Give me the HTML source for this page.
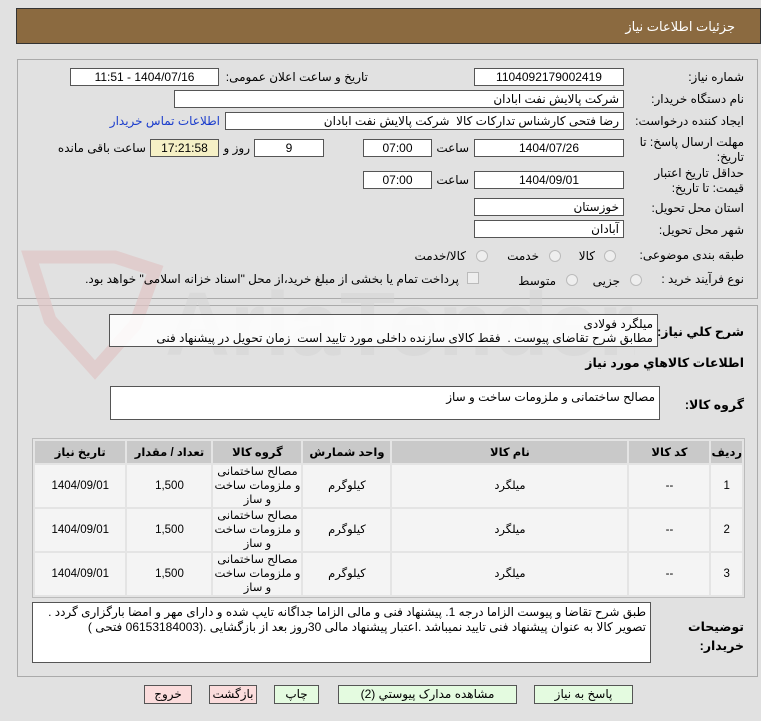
<!DOCTYPE html>
<html><head><meta charset="utf-8"><style>
*{box-sizing:border-box;margin:0;padding:0}
body{width:761px;height:721px;background:#e1e1e1;font-family:"Liberation Sans","DejaVu Sans",sans-serif;font-size:12px;color:#000;position:relative;overflow:hidden}
.a{position:absolute}
.box{position:absolute;background:#fff;border:1px solid #555;direction:rtl;padding:0 4px;line-height:16px;white-space:nowrap;overflow:hidden}
.c{text-align:center}
.lbl{position:absolute;direction:rtl;white-space:nowrap;text-align:right}
.wr{white-space:normal}
.rad{position:absolute;width:12px;height:12px;border-radius:50%;border:1px solid #bbb;background:#eee}
table{border-collapse:separate;border-spacing:2px;position:absolute;left:32px;top:438px;width:713px;border:1px solid #bbb;background:#e4e4e4}
td,th{text-align:center;font-size:11.5px;direction:rtl}
th{background:#c9c9c9;height:22px;font-weight:bold}
td{background:#f4f4f4;height:41px;line-height:14px}
.btn{position:absolute;top:685px;height:19px;border:1px solid #555;background:#e4fbe0;text-align:center;line-height:17px;direction:rtl}
.pk{background:#fbdcdc}
</style></head><body>
<div class="a" style="left:16px;top:8px;width:745px;height:36px;background:#8b6a40;border:1px solid #333"></div>
<div class="lbl" style="right:26px;top:19px;color:#fff;font-size:13px">جزئیات اطلاعات نیاز</div>

<div class="a" style="left:17px;top:59px;width:741px;height:240px;border:1px solid #aaa"></div>
<div class="a" style="left:17px;top:305px;width:741px;height:372px;border:1px solid #aaa"></div>

<svg class="a" style="left:15px;top:245px" width="620" height="140">
<path d="M15 12 L100 12 L140 25 L120 80 L80 125 L35 75 Z" fill="none" stroke="#e0c4c4" stroke-width="13" stroke-opacity="0.7"/>
<text x="150" y="110" font-size="90" font-family="Liberation Sans" font-weight="bold" fill="#d2d2d2" fill-opacity="0.45">AriaTender.net</text>
</svg>

<div class="lbl" style="right:17px;top:70px">شماره نیاز:</div>
<div class="box c" style="left:474px;top:68px;width:150px;height:18px">1104092179002419</div>
<div class="lbl" style="right:393px;top:70px">تاریخ و ساعت اعلان عمومی:</div>
<div class="box c" style="left:70px;top:68px;width:149px;height:18px">1404/07/16 - 11:51</div>

<div class="lbl" style="right:17px;top:92px">نام دستگاه خریدار:</div>
<div class="box" style="left:174px;top:90px;width:450px;height:18px">شرکت پالایش نفت ابادان</div>

<div class="lbl" style="right:17px;top:114px">ایجاد کننده درخواست:</div>
<div class="box" style="left:225px;top:112px;width:399px;height:18px">رضا فتحی کارشناس تدارکات کالا&nbsp; شرکت پالایش نفت ابادان</div>
<div class="lbl" style="right:541px;top:114px;color:#1a3ccc">اطلاعات تماس خریدار</div>

<div class="lbl wr" style="right:17px;top:135px;line-height:15px;width:115px">مهلت ارسال پاسخ: تا تاریخ:</div>
<div class="box c" style="left:474px;top:139px;width:150px;height:18px">1404/07/26</div>
<div class="lbl" style="right:292px;top:141px">ساعت</div>
<div class="box c" style="left:363px;top:139px;width:69px;height:18px">07:00</div>
<div class="box c" style="left:254px;top:139px;width:70px;height:18px">9</div>
<div class="lbl" style="right:511px;top:141px">روز و</div>
<div class="box c" style="left:150px;top:139px;width:69px;height:18px;background:#f5f0c6">17:21:58</div>
<div class="lbl" style="right:615px;top:141px">ساعت باقی مانده</div>

<div class="lbl wr" style="right:17px;top:166px;line-height:15px;width:115px">حداقل تاریخ اعتبار قیمت: تا تاریخ:</div>
<div class="box c" style="left:474px;top:171px;width:150px;height:18px">1404/09/01</div>
<div class="lbl" style="right:292px;top:173px">ساعت</div>
<div class="box c" style="left:363px;top:171px;width:69px;height:18px">07:00</div>

<div class="lbl" style="right:17px;top:201px">استان محل تحویل:</div>
<div class="box" style="left:474px;top:198px;width:150px;height:18px">خوزستان</div>
<div class="lbl" style="right:17px;top:223px">شهر محل تحویل:</div>
<div class="box" style="left:474px;top:220px;width:150px;height:18px">آبادان</div>

<div class="lbl" style="right:17px;top:248px">طبقه بندی موضوعی:</div>
<div class="rad" style="left:604px;top:250px"></div><div class="lbl" style="right:166px;top:249px">کالا</div>
<div class="rad" style="left:549px;top:250px"></div><div class="lbl" style="right:222px;top:249px">خدمت</div>
<div class="rad" style="left:476px;top:250px"></div><div class="lbl" style="right:295px;top:249px">کالا/خدمت</div>

<div class="lbl" style="right:17px;top:272px">نوع فرآیند خرید :</div>
<div class="rad" style="left:630px;top:274px"></div><div class="lbl" style="right:141px;top:274px">جزیی</div>
<div class="rad" style="left:566px;top:274px"></div><div class="lbl" style="right:205px;top:274px">متوسط</div>
<div class="a" style="left:467px;top:272px;width:12px;height:12px;border:1px solid #bbb;background:#eee"></div>
<div class="lbl" style="right:302px;top:272px">پرداخت تمام یا بخشی از مبلغ خرید،از محل "اسناد خزانه اسلامی" خواهد بود.</div>

<div class="lbl" style="right:17px;top:324px;font-weight:bold;font-size:12.5px">شرح کلي نياز:</div>
<div class="box" style="left:109px;top:314px;width:549px;height:33px;line-height:14px;padding-top:2px;background:rgba(255,255,255,.85)">میلگرد فولادی<br>مطابق شرح تقاضای پیوست .&nbsp; فقط کالای سازنده داخلی مورد تایید است&nbsp; زمان تحویل در پیشنهاد فنی</div>
<div class="lbl" style="right:17px;top:355px;font-weight:bold;font-size:12.5px">اطلاعات کالاهاي مورد نياز</div>

<div class="lbl" style="right:17px;top:397px;font-weight:bold;font-size:12.5px">گروه کالا:</div>
<div class="box" style="left:110px;top:386px;width:550px;height:34px;padding-top:2px">مصالح ساختمانی و ملزومات ساخت و ساز</div>

<table dir="rtl">
<tr><th style="width:27px">رديف</th><th style="width:80px">کد کالا</th><th style="width:235px">نام کالا</th><th style="width:87px">واحد شمارش</th><th style="width:88px">گروه کالا</th><th style="width:84px">تعداد / مقدار</th><th>تاريخ نياز</th></tr>
<tr><td>1</td><td>--</td><td>میلگرد</td><td>کیلوگرم</td><td>مصالح ساختمانی و ملزومات ساخت و ساز</td><td>1,500</td><td>1404/09/01</td></tr>
<tr><td>2</td><td>--</td><td>میلگرد</td><td>کیلوگرم</td><td>مصالح ساختمانی و ملزومات ساخت و ساز</td><td>1,500</td><td>1404/09/01</td></tr>
<tr><td>3</td><td>--</td><td>میلگرد</td><td>کیلوگرم</td><td>مصالح ساختمانی و ملزومات ساخت و ساز</td><td>1,500</td><td>1404/09/01</td></tr>
</table>

<div class="lbl wr" style="right:17px;top:618px;font-weight:bold;font-size:12.5px;line-height:19px;width:60px">توضیحات خریدار:</div>
<div class="box" style="left:32px;top:602px;width:619px;height:61px;white-space:normal;line-height:15px;padding-top:2px">طبق شرح تقاضا و پیوست الزاما درجه 1. پیشنهاد فنی و مالی الزاما جداگانه تایپ شده و دارای مهر و امضا بارگزاری گردد . تصویر کالا به عنوان پیشنهاد فنی تایید نمیباشد .اعتبار پیشنهاد مالی 30روز بعد از بازگشایی .(06153184003 فتحی )</div>

<div class="btn" style="left:534px;width:99px">پاسخ به نیاز</div>
<div class="btn" style="left:338px;width:179px">مشاهده مدارک پیوستي (2)</div>
<div class="btn" style="left:274px;width:45px">چاپ</div>
<div class="btn pk" style="left:209px;width:48px">بازگشت</div>
<div class="btn pk" style="left:144px;width:48px">خروج</div>
</body></html>
